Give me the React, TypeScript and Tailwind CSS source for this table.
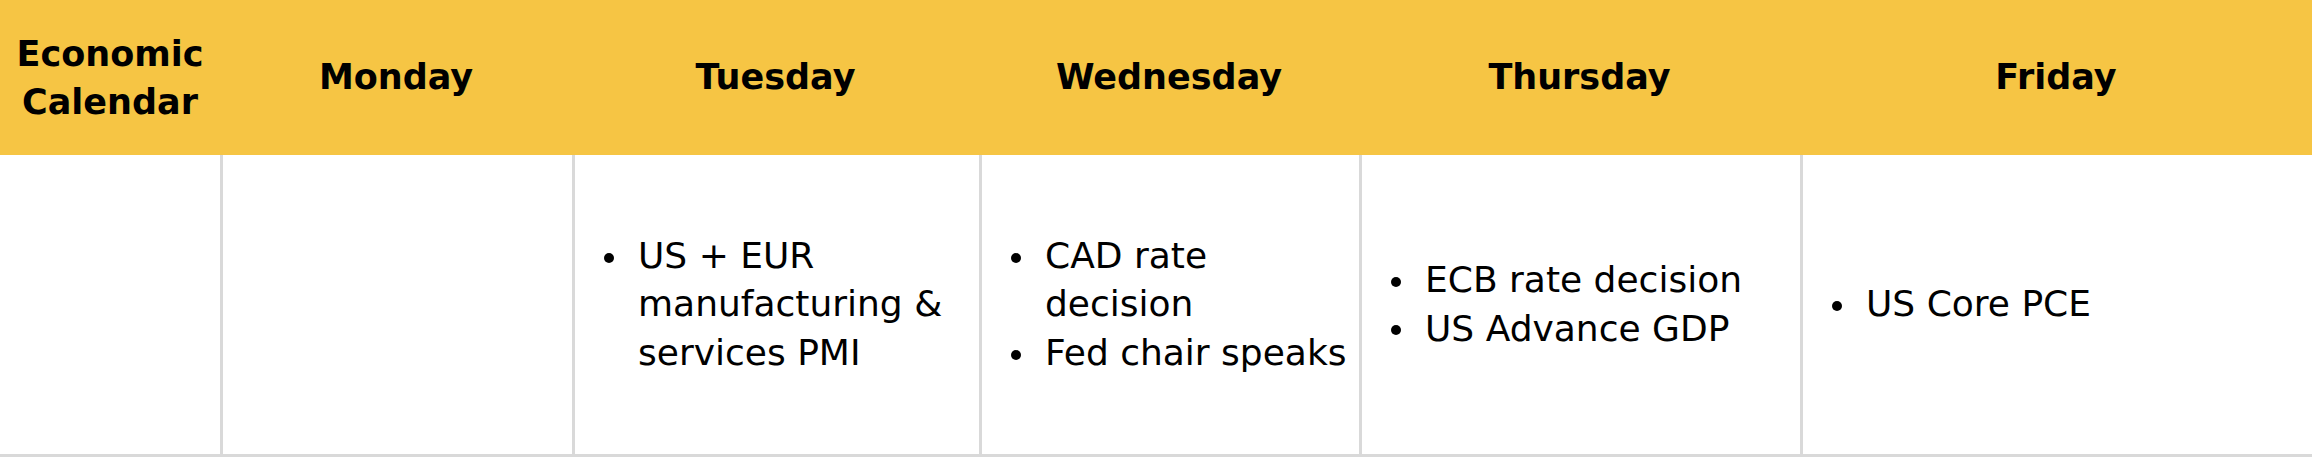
const days = [
  { name: "Monday", items: [] as string[] },
  { name: "Tuesday", items: ["US + EUR manufacturing & services PMI"] },
  { name: "Wednesday", items: ["CAD rate decision", "Fed chair speaks"] },
  { name: "Thursday", items: ["ECB rate decision", "US Advance GDP"] },
  { name: "Friday", items: ["US Core PCE"] },
]

const cols = "grid grid-cols-[220px_352px_407px_380px_441px_1fr]"

function Cell({ items }: { items: string[] }) {
  return (
    <div className="flex items-center border-l-[3px] border-[#d9d9d9] pl-[29px] pr-[4px]">
      <ul className="w-full">
        {items.map((item) => (
          <li key={item} className="flex items-start">
            <span className="flex h-[48.5px] shrink-0 items-center pt-[3px]">
              <span className="h-[10px] w-[10px] rounded-full bg-black" />
            </span>
            <span className="ml-[24px] leading-[48.5px]">{item}</span>
          </li>
        ))}
      </ul>
    </div>
  )
}

export default function App() {
  return (
    <div className="w-[2312px] h-[462px] bg-white text-black font-['DejaVu_Sans',sans-serif]">
      {/* Header */}
      <div className={`${cols} h-[155px] bg-[#f6c544] text-[35px] font-bold`}>
        <div className="flex items-center justify-center text-center leading-[48px]">
          Economic
          <br />
          Calendar
        </div>
        {days.map((d) => (
          <div key={d.name} className="flex items-center justify-center">
            {d.name}
          </div>
        ))}
      </div>

      {/* Body */}
      <div className={`${cols} h-[302px] border-b-[3px] border-[#d9d9d9] text-[36px]`}>
        <div />
        {days.map((d) => (
          <Cell key={d.name} items={d.items} />
        ))}
      </div>
    </div>
  )
}
